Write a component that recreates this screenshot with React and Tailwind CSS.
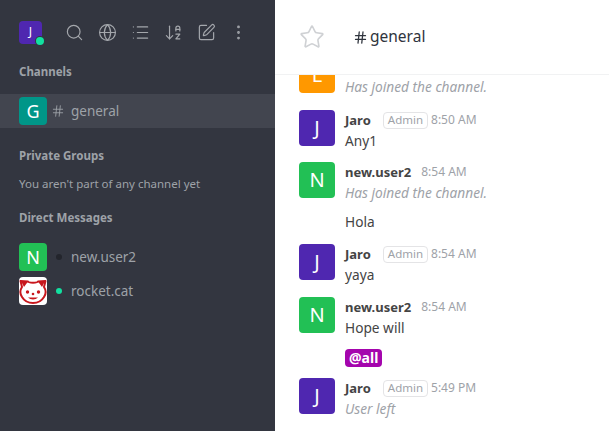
import { Search, Globe, List, ArrowDownAZ, SquarePen, MoreVertical, Hash, Star } from 'lucide-react'

const font = { fontFamily: '"Noto Sans", sans-serif' }

function RocketCat() {
  return (
    <svg width="28" height="28" viewBox="0 0 28 28" className="rounded-sm bg-white shrink-0">
      <path d="M1.500 4 L9 4.500 C9.500 6 18.500 6 19 4.500 L26.500 4 L25 10 C27 13 27 17 25 20 C22 25 18 26 14 26 C10 26 6 25 3 20 C1 17 1 13 3 10 Z" fill="#fff" stroke="#c8171d" strokeWidth="2" strokeLinejoin="round" />
      <path d="M2 4 L9 4.500 L5 10 Z M26 4 L19 4.500 L23 10 Z" fill="#c8171d" />
      <circle cx="8.500" cy="15" r="1.700" fill="#c8171d" />
      <circle cx="19.500" cy="15" r="1.700" fill="#c8171d" />
      <circle cx="14" cy="17" r="1.300" fill="#c8171d" />
      <path d="M9 20.500 C11.500 23 16.500 23 19 20.500 Z" fill="#c8171d" />
    </svg>
  )
}

function Avatar({ letter, color }) {
  return (
    <div className={`w-9 h-9 rounded-sm flex items-center justify-center text-white text-xl shrink-0 ${color}`}>
      {letter}
    </div>
  )
}

function Meta({ name, admin, time }) {
  return (
    <div className="flex items-center h-5 text-[13px] leading-5">
      <span className="font-bold text-[#444] mr-[10px]">{name}</span>
      {admin && (
        <span className="border border-[#e4e4e6] rounded-sm px-1 h-[17px] flex items-center text-[11.500px] text-[#9ea2a8] ml-[2px] mr-[3px]">Admin</span>
      )}
      <span className="text-xs text-[#9ea2a8]">{time}</span>
    </div>
  )
}

function Message({ letter, color, name, admin, time, children }) {
  return (
    <div className="flex gap-[10px] pl-6">
      <Avatar letter={letter} color={color} />
      <div className="min-w-0">
        <Meta name={name} admin={admin} time={time} />
        <div className="pt-px">{children}</div>
      </div>
    </div>
  )
}

const purple = 'bg-[#4f27b0]'
const green = 'bg-[#22c055]'

export default function App() {
  return (
    <div className="flex w-[609px] h-[431px] overflow-hidden bg-white" style={font}>
      <aside className="w-[275px] shrink-0 bg-[#333640] text-[#9ea2a8]">
        <div className="flex items-center pl-[19px] h-[64px]">
          <div className="relative w-[23px] h-[23px] rounded-sm bg-[#4f27b0] flex items-center justify-center text-white text-xs shrink-0">
            J
            <span className="absolute -right-[2px] -bottom-[1px] w-[8px] h-[8px] rounded-full bg-[#12e0a0] ring-1 ring-[#333640]" />
          </div>
          <div className="flex items-center ml-[23px] gap-[14px] text-[#a4a7ac]">
            <Search size={19} strokeWidth={1.5} />
            <Globe size={19} strokeWidth={1.5} />
            <List size={19} strokeWidth={1.5} />
            <ArrowDownAZ size={19} strokeWidth={1.5} />
            <SquarePen size={19} strokeWidth={1.5} />
            <MoreVertical size={19} strokeWidth={1.5} className="-ml-px" />
          </div>
        </div>
        <div className="pl-[19px] text-[11.500px] font-bold leading-4">Channels</div>
        <div className="flex items-center h-[34px] mt-[14px] pl-[19px] bg-[#42454f]">
          <div className="w-7 h-7 rounded-sm bg-[#009688] flex items-center justify-center text-white text-lg shrink-0">G</div>
          <Hash size={14} strokeWidth={1.5} className="ml-[4px]" />
          <span className="ml-[6px] text-[13.500px]">general</span>
        </div>
        <div className="pl-[19px] mt-[20px] text-[11.500px] font-bold leading-4">Private Groups</div>
        <div className="pl-[19px] mt-[12px] text-[11.500px] leading-4">You aren't part of any channel yet</div>
        <div className="pl-[19px] mt-[18px] text-[11.500px] font-bold leading-4">Direct Messages</div>
        <div className="flex items-center h-[34px] mt-[14px] pl-[19px]">
          <div className="w-7 h-7 rounded-sm bg-[#22c055] flex items-center justify-center text-white text-lg shrink-0">N</div>
          <span className="ml-[9px] w-[6px] h-[6px] rounded-full bg-[#23252c]" />
          <span className="ml-[9px] text-[13.500px]">new.user2</span>
        </div>
        <div className="flex items-center h-[34px] pl-[19px]">
          <RocketCat />
          <span className="ml-[9px] w-[6px] h-[6px] rounded-full bg-[#12e0a0]" />
          <span className="ml-[9px] text-[13.500px]">rocket.cat</span>
        </div>
      </aside>
      <main className="flex-1 min-w-0 flex flex-col">
        <header className="h-[75px] shrink-0 flex items-center border-b border-[#f1f2f3] relative z-10 bg-white">
          <Star size={26} strokeWidth={1.5} className="ml-6 text-[#cfd1d4]" />
          <Hash size={15} strokeWidth={2} className="ml-[28px] text-[#2f343d]" />
          <span className="ml-[2px] text-[15.500px] text-[#2f343d]">general</span>
        </header>
        <div className="flex-1 overflow-hidden">
          <div className="-mt-[18px]">
            <Message letter="L" color="bg-[#ff9800]" name="" time="">
              <p className="-mt-px text-[13.700px] italic text-[#9ea2a8] leading-5">Has joined the channel.</p>
            </Message>
            <div className="mt-[13px]">
              <Message letter="J" color={purple} name="Jaro" admin time="8:50 AM">
                <p className="text-[13.700px] text-[#444] leading-5">Any1</p>
              </Message>
            </div>
            <div className="mt-[11px]">
              <Message letter="N" color={green} name="new.user2" time="8:54 AM">
                <p className="text-[13.700px] italic text-[#9ea2a8] leading-5">Has joined the channel.</p>
                <p className="text-[13.700px] text-[#444] leading-5 mt-[9px]">Hola</p>
              </Message>
            </div>
            <div className="mt-[12px]">
              <Message letter="J" color={purple} name="Jaro" admin time="8:54 AM">
                <p className="text-[13.700px] text-[#444] leading-5">yaya</p>
              </Message>
            </div>
            <div className="mt-[12px]">
              <Message letter="N" color={green} name="new.user2" time="8:54 AM">
                <p className="text-[13.700px] text-[#444] leading-5">Hope will</p>
                <p className="mt-[9px] leading-5">
                  <span className="inline-block bg-[#a405ad] text-white text-[14px] font-bold rounded-sm px-1 leading-[18px]">@all</span>
                </p>
              </Message>
            </div>
            <div className="mt-[11px]">
              <Message letter="J" color={purple} name="Jaro" admin time="5:49 PM">
                <p className="text-[13.700px] italic text-[#9ea2a8] leading-5">User left</p>
              </Message>
            </div>
          </div>
        </div>
      </main>
    </div>
  )
}
